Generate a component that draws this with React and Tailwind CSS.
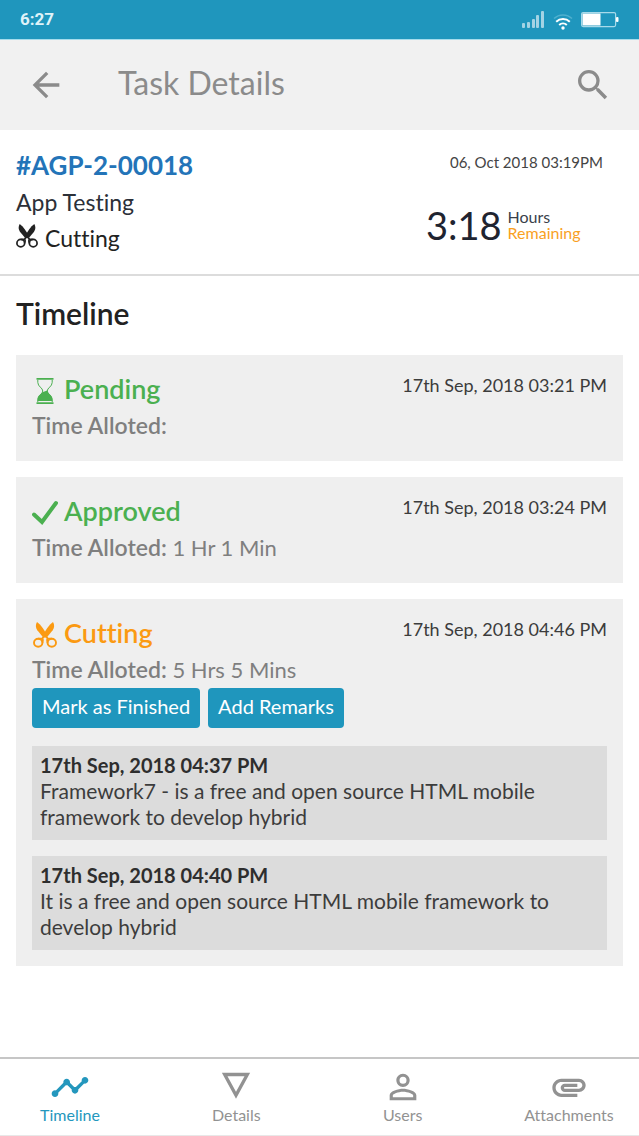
import React, { useState } from "react";
import {
  MdArrowBack,
  MdSearch,
  MdTimeline,
  MdPersonOutline,
  MdAttachment,
} from "react-icons/md";

const task = {
  id: "#AGP-2-00018",
  name: "App Testing",
  stage: "Cutting",
  date: "06, Oct 2018 03:19PM",
  remaining: "3:18",
};

const timeline = [
  {
    status: "Pending",
    icon: "hourglass",
    date: "17th Sep, 2018 03:21 PM",
    allotted: "",
  },
  {
    status: "Approved",
    icon: "check",
    date: "17th Sep, 2018 03:24 PM",
    allotted: "1 Hr 1 Min",
  },
  {
    status: "Cutting",
    icon: "scissors",
    date: "17th Sep, 2018 04:46 PM",
    allotted: "5 Hrs 5 Mins",
    active: true,
    remarks: [
      {
        date: "17th Sep, 2018 04:37 PM",
        text: "Framework7 - is a free and open source HTML mobile framework to develop hybrid",
      },
      {
        date: "17th Sep, 2018 04:40 PM",
        text: "It is a free and open source HTML mobile framework to develop hybrid",
      },
    ],
  },
];

const Triangle = ({ size }) => (
  <svg width={size} height={size} viewBox="0 0 24 24" fill="none" aria-hidden="true">
    <path d="M5.200 5h13.600L12 17.500z" stroke="currentColor" strokeWidth="2" transform="translate(0 -.5)" />
  </svg>
);

const tabs = [
  { label: "Timeline", Icon: MdTimeline },
  { label: "Details", Icon: Triangle },
  { label: "Users", Icon: MdPersonOutline },
  { label: "Attachments", Icon: MdAttachment },
];

const Scissors = ({ className }) => (
  <svg viewBox="0 0 24 26" className={className} fill="currentColor" aria-hidden="true">
    <path d="M4 0C2.400 2.800 2.500 5.800 4.300 8.300L9.800 15l3.500-2.500C11.600 8 8 3 4 0z" />
    <path d="M20 0c1.600 2.800 1.500 5.800-.3 8.300L14.200 15l-3.500-2.500C12.400 8 16 3 20 0z" />
    <g fill="none" stroke="currentColor" strokeWidth="1.900">
      <ellipse cx="5.200" cy="20.800" rx="4.200" ry="4" />
      <ellipse cx="18.800" cy="20.800" rx="4.200" ry="4" />
      <path d="M13 12.500l-3.500 3.700c-1 .6-2.800.3-4.300.6M9.500 16.200c.6 1.400.5 3.200-.1 4.600M11 12.500l3.500 3.700c1 .6 2.800.3 4.300.6M14.500 16.200c-.6 1.400-.5 3.200.1 4.600" />
    </g>
  </svg>
);

const Hourglass = ({ className }) => (
  <svg viewBox="0 0 26 26" className={className} fill="currentColor" aria-hidden="true">
    <path d="M4.500 0h17v1.800h-17zM4.500 24.200h17V26h-17z" />
    <path
      d="M5.800 2v2.500c0 4 5 5.500 5 8.500s-5 4.500-5 8.500V24M20.200 2v2.500c0 4-5 5.500-5 8.500s5 4.500 5 8.500V24"
      fill="none"
      stroke="currentColor"
      strokeWidth="1"
    />
    <path d="M15.200 12.500c.3 3 5.200 4.500 5.200 8.500v2H5.600v-2c0-3.500 3.700-5 4.800-6.800z" />
  </svg>
);

const Check = ({ className }) => (
  <svg viewBox="0 0 26 26" className={className} fill="none" aria-hidden="true">
    <path d="M2 14.500l8 7.500L24 3" stroke="currentColor" strokeWidth="4" strokeLinecap="round" strokeLinejoin="miter" />
  </svg>
);

const icons = { hourglass: Hourglass, check: Check, scissors: Scissors };

const StatusBar = () => (
  <div className="flex h-10 items-center justify-between border-b border-[#a5dcec] bg-[#1f96bd] px-5 text-white">
    <span className="font-[Roboto] text-[17px] font-bold text-[#dff3f9]">6:27</span>
    <div className="flex items-center gap-2">
      <svg width="23" height="18" viewBox="0 0 23 18" fill="#a3d3e4" aria-hidden="true">
        <rect x="0" y="12" width="3" height="5" rx="1" />
        <rect x="5" y="11" width="3" height="6" rx="1" />
        <rect x="10" y="8" width="3" height="9" rx="1" />
        <rect x="14" y="4" width="3" height="13" rx="1" />
        <rect x="19" y="0" width="3" height="17" rx="1" />
      </svg>
      <svg className="mt-1" width="20" height="16" viewBox="0 0 20 16" fill="none" strokeWidth="2" aria-hidden="true">
        <path d="M1 4.500a13 13 0 0 1 18 0" stroke="#4fb0ce" strokeWidth="1.500" />
        <path d="M3.200 7.700a10 10 0 0 1 13.600 0M6.200 11a5.600 5.600 0 0 1 7.600 0" stroke="#fff" />
        <circle cx="10" cy="14" r="1.700" fill="#fff" />
      </svg>
      <svg width="38" height="16" viewBox="0 0 38 16" aria-hidden="true">
        <rect x=".6" y=".6" width="34" height="14" rx="1.500" fill="none" stroke="#a8daea" strokeWidth="1.200" />
        <rect x="1.500" y="1.500" width="18" height="12" fill="#fff" />
        <rect x="35" y="5" width="2.500" height="5" rx="1" fill="#fff" />
      </svg>
    </div>
  </div>
);

const Remark = ({ date, text }) => (
  <div className="bg-[#dcdcdc] px-2 pt-1.5 pb-2.5 text-[21px] leading-[26px] text-[#3c3c3c]">
    <p className="text-xl leading-[26px] font-bold text-[#2e2e2e]">{date}</p>
    <p>{text}</p>
  </div>
);

const TimelineCard = ({ item }) => {
  const Icon = icons[item.icon];
  return (
    <li className="bg-[#efefef] px-4 pt-4">
      <div className="flex items-start justify-between">
        <h3
          className={`flex items-center gap-1.5 text-[27px] leading-9 font-semibold ${
            item.active ? "text-[#fb9a12]" : "text-[#4bb050]"
          }`}
        >
          <Icon className="mt-1 h-[26px] w-[26px]" />
          {item.status}
        </h3>
        <time className="text-lg leading-7 text-[#3c3c3c]">{item.date}</time>
      </div>
      <p className="pb-[17px] text-[22px] leading-9 text-[#7f7f7f] has-[+div]:pb-0">
        <span className="text-[23px] font-semibold">Time Alloted:</span> {item.allotted}
      </p>
      {item.remarks && (
        <div className="pb-4">
          <div className="mb-[18px] flex gap-2">
            <button type="button" className="h-10 rounded bg-[#1f96bd] px-2.5 pb-1 text-xl text-white">
              Mark as Finished
            </button>
            <button type="button" className="h-10 rounded bg-[#1f96bd] px-2.5 pb-1 text-xl text-white">
              Add Remarks
            </button>
          </div>
          <div className="flex flex-col gap-4">
            {item.remarks.map((remark) => (
              <Remark key={remark.date} {...remark} />
            ))}
          </div>
        </div>
      )}
    </li>
  );
};

const App = () => {
  const [activeTab, setActiveTab] = useState("Timeline");

  return (
    <div className="flex min-h-screen flex-col bg-white font-[Lato,sans-serif] text-[#222] [font-variant-ligatures:none]">
      <StatusBar />

      <header className="flex h-[90px] items-center bg-[#f1f1f1] px-[26px] text-[#8b8b8b]">
        <button type="button" aria-label="Back">
          <MdArrowBack size={40} />
        </button>
        <h1 className="ml-[52px] flex-1 pb-1 text-[32px] leading-10">Task Details</h1>
        <button type="button" aria-label="Search">
          <MdSearch size={40} />
        </button>
      </header>

      {/* Task summary */}
      <section className="flex justify-between border-b-2 border-[#dcdcdc] px-4 pt-4 pb-[18px]">
        <div className="text-[23px] leading-9">
          <h2 className="text-[26px] leading-[38px] font-bold text-[#2374b8]">{task.id}</h2>
          <p className="text-[#2c3038]">{task.name}</p>
          <p className="flex items-center gap-[7px]">
            <Scissors className="mb-1 h-6 w-[22px]" />
            {task.stage}
          </p>
        </div>
        <div className="pr-5">
          <p className="text-[15px] leading-8 text-[#444]">{task.date}</p>
          <div className="mt-[22px] -ml-6 flex items-center gap-1.5">
            <span className="text-[38px] leading-[50px] text-[#1f2430]">{task.remaining}</span>
            <p className="text-base leading-4 text-[#3a3f4a]">
              Hours
              <span className="block text-[#f9a11f]">Remaining</span>
            </p>
          </div>
        </div>
      </section>

      <main className="flex-1 px-4 pt-4 pb-6">
        <h2 className="mb-5 text-[30px] leading-[43px] font-semibold">Timeline</h2>
        <ul className="flex flex-col gap-4">
          {timeline.map((item) => (
            <TimelineCard key={item.status} item={item} />
          ))}
        </ul>
      </main>

      <nav className="flex justify-between border-t-2 border-b border-t-[#c6c6c6] border-b-[#e8e8e8] px-[22px] pt-2 pb-3">
        {tabs.map(({ label, Icon }) => (
          <button
            key={label}
            type="button"
            onClick={() => setActiveTab(label)}
            className={`flex w-24 flex-col items-center text-base leading-4 ${
              activeTab === label ? "text-[#2497bd]" : "text-[#929292]"
            }`}
          >
            <Icon size={40} />
            {label}
          </button>
        ))}
      </nav>
    </div>
  );
};

export default App;
